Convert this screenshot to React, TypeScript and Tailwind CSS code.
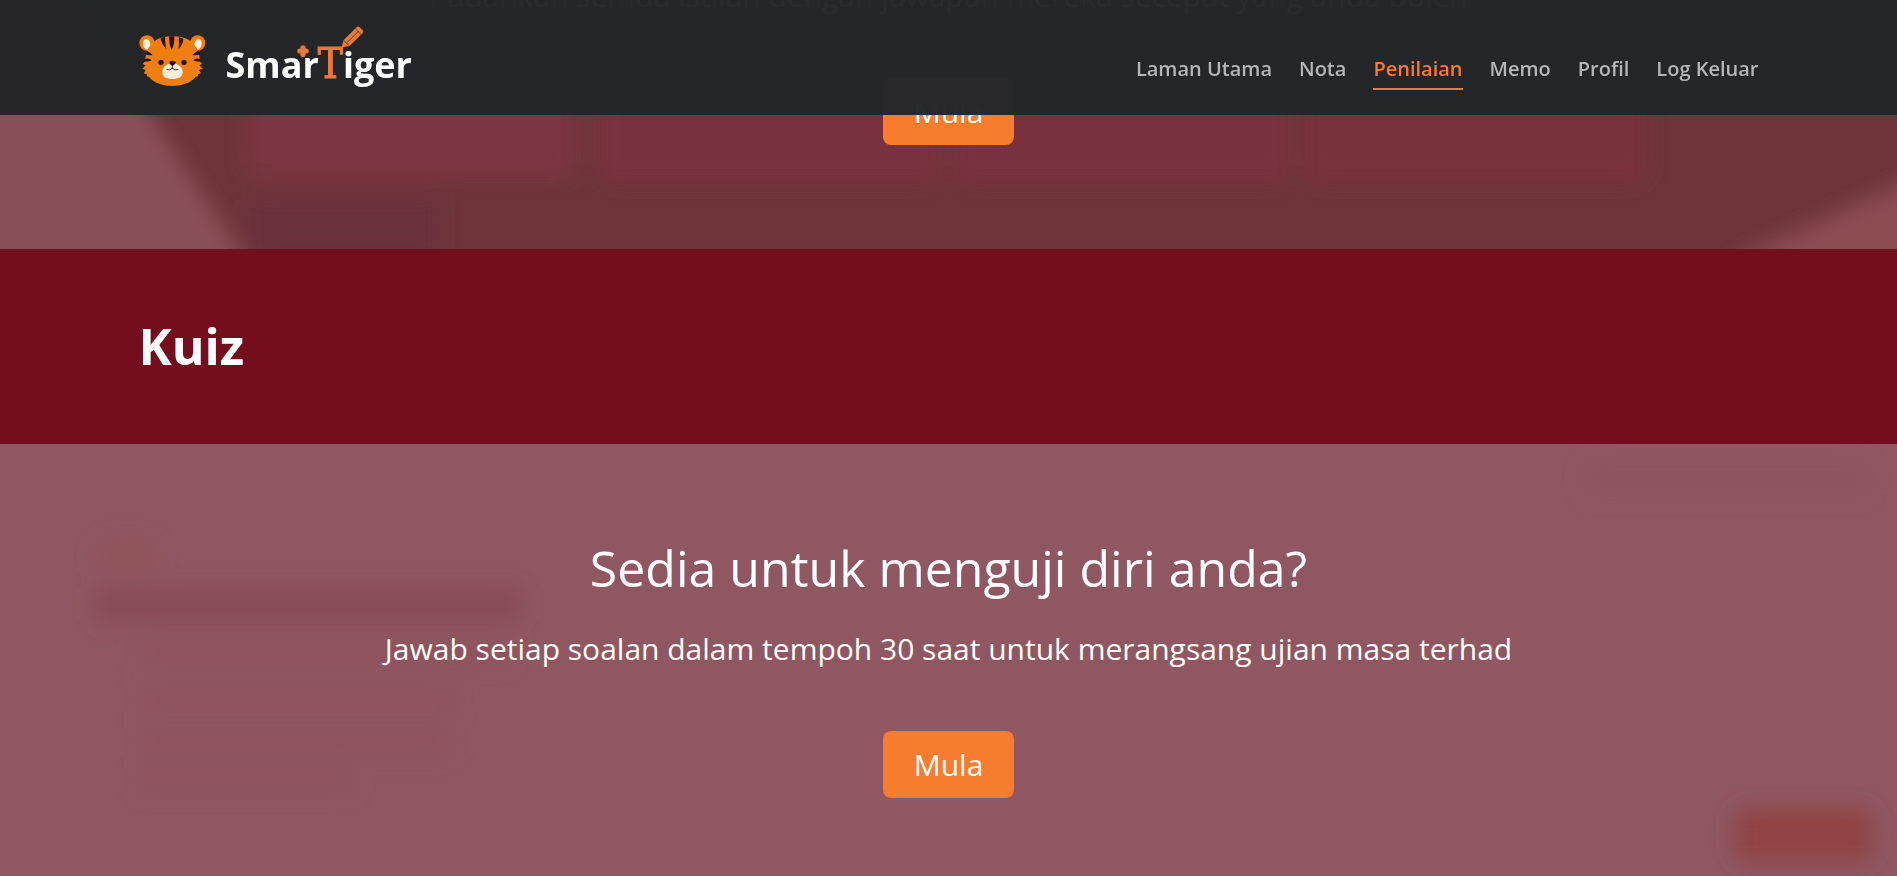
const navItems = [
  { label: "Laman Utama", active: false },
  { label: "Nota", active: false },
  { label: "Penilaian", active: true },
  { label: "Memo", active: false },
  { label: "Profil", active: false },
  { label: "Log Keluar", active: false },
];

function TigerIcon() {
  return (
    <svg viewBox="56 73 201 153" className="h-[51px] w-[67px] shrink-0" aria-hidden="true">
      <circle cx="80" cy="97" r="23" fill="#f07f10" />
      <circle cx="232" cy="97" r="23" fill="#f07f10" />
      <ellipse cx="79" cy="101" rx="11" ry="16" fill="#fdeedd" transform="rotate(-12 79 101)" />
      <ellipse cx="233" cy="101" rx="11" ry="16" fill="#fdeedd" transform="rotate(12 233 101)" />
      <path
        d="M156 77C126 76 99 87 84 112C77 124 75 138 75 151L67 160L76 164L66 174L76 178L70 188L80 191C78 196 80 198 86 199C102 218 130 226 156 226C183 226 210 218 226 199C233 198 235 196 233 191L242 188L236 178L247 174L237 164L245 160L238 151C238 138 236 124 229 112C214 87 187 76 156 77Z"
        fill="#f07f10"
      />
      <g fill="#2b0f12">
        <path d="M146 77Q155 76 162 77Q163 103 154 119Q146 103 146 77Z" />
        <path d="M120 84Q127 80 134 79Q134 98 138 115Q126 103 120 84Z" />
        <path d="M175 79Q182 81 189 84Q188 101 175 115Q177 97 175 79Z" />
        <path d="M81 120L97 133Q86 135 75 131Z" />
        <path d="M75 145Q86 141 94 149Q84 155 69 151Z" />
        <path d="M232 120L216 133Q228 135 240 131Z" />
        <path d="M238 145Q227 141 219 149Q229 155 244 151Z" />
        <circle cx="122" cy="155" r="8" />
        <circle cx="191" cy="155" r="8" />
      </g>
      <path
        d="M156 158C143 157 126 168 126 184C126 199 139 205 156 205C174 205 187 199 187 184C187 168 170 157 156 158Z"
        fill="#fdeedd"
      />
      <path d="M147 153Q156 148 166 153Q167 160 156 166Q146 160 147 153Z" fill="#2b0f12" />
      <path
        d="M156 164V173M156 173Q150 181 140 177M156 173Q163 181 173 177"
        fill="none"
        stroke="#2b0f12"
        strokeWidth="2.6"
        strokeLinecap="round"
      />
    </svg>
  );
}

function Wordmark() {
  return (
    <span className="relative flex items-baseline pt-2 text-[36px] leading-[50px] font-bold text-white">
      <span>Smar</span>
      <span className="-ml-px font-['DejaVu_Serif_Condensed','Liberation_Serif',serif] text-[42px] leading-[50px] font-normal text-[#e8793a] [-webkit-text-stroke:1px_#e8793a]">
        T
      </span>
      <span>iger</span>
      <svg
        viewBox="0 0 66 39"
        className="absolute -top-[5px] left-[73px] h-[39px] w-[66px]"
        overflow="visible"
        aria-hidden="true"
      >
        <g fill="#e8793a">
          <circle cx="4" cy="21.800" r="2.600" />
          <circle cx="4" cy="28.400" r="2.600" />
          <circle cx="0.800" cy="25" r="2.600" />
          <circle cx="7.200" cy="25" r="2.600" />
          <rect x="1.500" y="22.500" width="5" height="5" />
          <path d="M42.500 21.500L44.500 14.200L57.600 1.200Q59 0 60.600 1.300L63.600 4.200Q65 5.600 63.600 7.200L50.500 20Z" />
        </g>
        <path
          d="M44.500 14.200L50.500 20M47.500 17L60 4.800M56.500 3L62 8.400"
          fill="none"
          stroke="#26282b"
          strokeWidth="0.700"
        />
      </svg>
    </span>
  );
}

function Header() {
  return (
    <header className="fixed inset-x-0 top-0 z-10 bg-[#242629]/98">
      <div className="mx-auto flex h-[115px] max-w-[1620px] items-center justify-between">
        <a href="#utama" aria-label="SmarTiger" className="flex items-center gap-5 pt-[6px]">
          <TigerIcon />
          <Wordmark />
        </a>
        <nav className="flex items-center gap-[27px] pt-[30px]">
          {navItems.map((item) => (
            <a
              key={item.label}
              href="#menu"
              className={
                item.active
                  ? "border-b-2 border-[#f77c2d] pb-[5px] text-[20px] leading-7 font-semibold text-[#f77c2d]"
                  : "border-b-2 border-transparent pb-[5px] text-[20px] leading-7 font-semibold text-[#b5b6b8]"
              }
            >
              {item.label}
            </a>
          ))}
        </nav>
      </div>
    </header>
  );
}

function StartButton() {
  return (
    <button
      type="button"
      className="h-[67px] w-[131px] shrink-0 rounded-lg bg-[#f77c2d] text-[30px] leading-[45px] text-white"
    >
      Mula
    </button>
  );
}

function MatchBackdrop() {
  return (
    <svg
      viewBox="0 0 1897 249"
      preserveAspectRatio="none"
      className="absolute inset-0 h-full w-full"
      aria-hidden="true"
    >
      <defs>
        <filter id="soft" x="-10%" y="-10%" width="120%" height="120%">
          <feGaussianBlur stdDeviation="10" />
        </filter>
      </defs>
      <rect width="1897" height="249" fill="#6e343a" />
      <g filter="url(#soft)">
        <rect x="245" y="-20" width="332" height="200" rx="16" fill="#7a3541" />
        <rect x="597" y="-20" width="346" height="204" rx="16" fill="#79313c" />
        <rect x="953" y="-20" width="340" height="204" rx="16" fill="#79313c" />
        <rect x="1303" y="-20" width="346" height="204" rx="16" fill="#79313b" />
        <path d="M-60 -20H80L150 115L265 290H-60Z" fill="#894f56" />
        <path d="M1957 158L1735 258V290H1957Z" fill="#8a4c51" />
        <rect x="250" y="200" width="190" height="60" fill="#6b303b" />
      </g>
    </svg>
  );
}

function QuizBackdrop() {
  return (
    <svg
      viewBox="0 0 1897 458"
      preserveAspectRatio="none"
      className="absolute inset-0 h-full w-full"
      aria-hidden="true"
    >
      <defs>
        <filter id="quiz-soft" x="-10%" y="-10%" width="120%" height="120%">
          <feGaussianBlur stdDeviation="11" />
        </filter>
      </defs>
      <rect width="1897" height="458" fill="#8f5761" />
      <g filter="url(#quiz-soft)">
        <rect x="98" y="98" width="56" height="28" fill="#905259" />
        <rect x="96" y="145" width="424" height="32" fill="#874955" />
        <g fill="#8e535d">
          <rect x="140" y="198" width="370" height="22" />
          <rect x="140" y="244" width="318" height="22" />
          <rect x="140" y="286" width="312" height="24" />
          <rect x="140" y="326" width="212" height="22" />
        </g>
        <rect x="1586" y="18" width="280" height="32" fill="#8e555f" />
        <rect x="1735" y="365" width="137" height="52" rx="8" fill="#904243" />
      </g>
    </svg>
  );
}

export default function App() {
  return (
    <div className="h-screen overflow-hidden bg-[#8f5761] font-['Open_Sans','Noto_Sans',sans-serif] text-white">
      <Header />
      <main>
        <section className="relative h-[249px] overflow-hidden">
          <MatchBackdrop />
          <div className="relative flex h-full flex-col items-center justify-end pb-[104px] text-center">
            <p className="mb-[60px] text-[30px] leading-[45px]">
              Padankan semua istilah dengan jawapan mereka secepat yang anda boleh
            </p>
            <StartButton />
          </div>
        </section>
        <section className="bg-[#740e1f] py-[60px]">
          <h1 className="mx-auto max-w-[1620px] text-[50px] leading-[75px] font-bold">Kuiz</h1>
        </section>
        <section className="relative overflow-hidden">
          <QuizBackdrop />
          <div className="relative flex flex-col items-center pt-[94px] pb-[104px] text-center">
            <h2 className="mb-7 text-[50px] leading-[60px]">Sedia untuk menguji diri anda?</h2>
            <p className="mb-[60px] text-[30px] leading-[45px]">
              Jawab setiap soalan dalam tempoh 30 saat untuk merangsang ujian masa terhad
            </p>
            <StartButton />
          </div>
        </section>
      </main>
    </div>
  );
}
